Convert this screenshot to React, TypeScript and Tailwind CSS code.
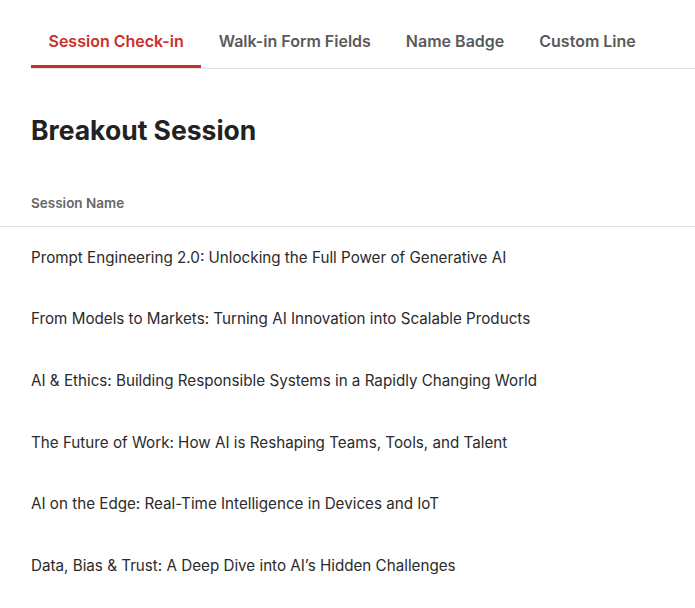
const tabs = ['Session Check-in', 'Walk-in Form Fields', 'Name Badge', 'Custom Line'];

const sessions = [
  'Prompt Engineering 2.0: Unlocking the Full Power of Generative AI',
  'From Models to Markets: Turning AI Innovation into Scalable Products',
  'AI & Ethics: Building Responsible Systems in a Rapidly Changing World',
  'The Future of Work: How AI is Reshaping Teams, Tools, and Talent',
  'AI on the Edge: Real-Time Intelligence in Devices and IoT',
  'Data, Bias & Trust: A Deep Dive into AI\u2019s Hidden Challenges',
];

export default function App() {
  return (
    <div className="min-h-screen bg-white font-['Inter',sans-serif] text-[#222]">
      {/* Tabs */}
      <div className="ml-[31px] pt-[17px] flex border-b border-[#e2e2e2]">
        {tabs.map((tab, i) => (
          <button
            key={tab}
            className={`px-[17.5px] pt-3 pb-3 text-[16px] leading-6 font-semibold border-b-[3px] ${
              i === 0 ? 'text-[#c9302c] border-[#c9302c]' : 'text-[#5a5a5a] border-transparent'
            }`}
          >
            {tab}
          </button>
        ))}
      </div>

      {/* Heading */}
      <h1 className="px-[31px] pt-[45px] text-[26.5px] leading-8 font-bold text-[#222]">Breakout Session</h1>

      {/* Table */}
      <div className="mt-[47px]">
        <div className="px-[31px] pb-[13px] text-[13.5px] leading-5 font-semibold text-[#666] border-b border-[#e2e2e2]">
          Session Name
        </div>
        {sessions.map((s) => (
          <div key={s} className="px-[31px] pt-px h-[61.6px] flex items-center text-[15.2px] text-[#2b2b2b]">
            {s}
          </div>
        ))}
      </div>
    </div>
  );
}
